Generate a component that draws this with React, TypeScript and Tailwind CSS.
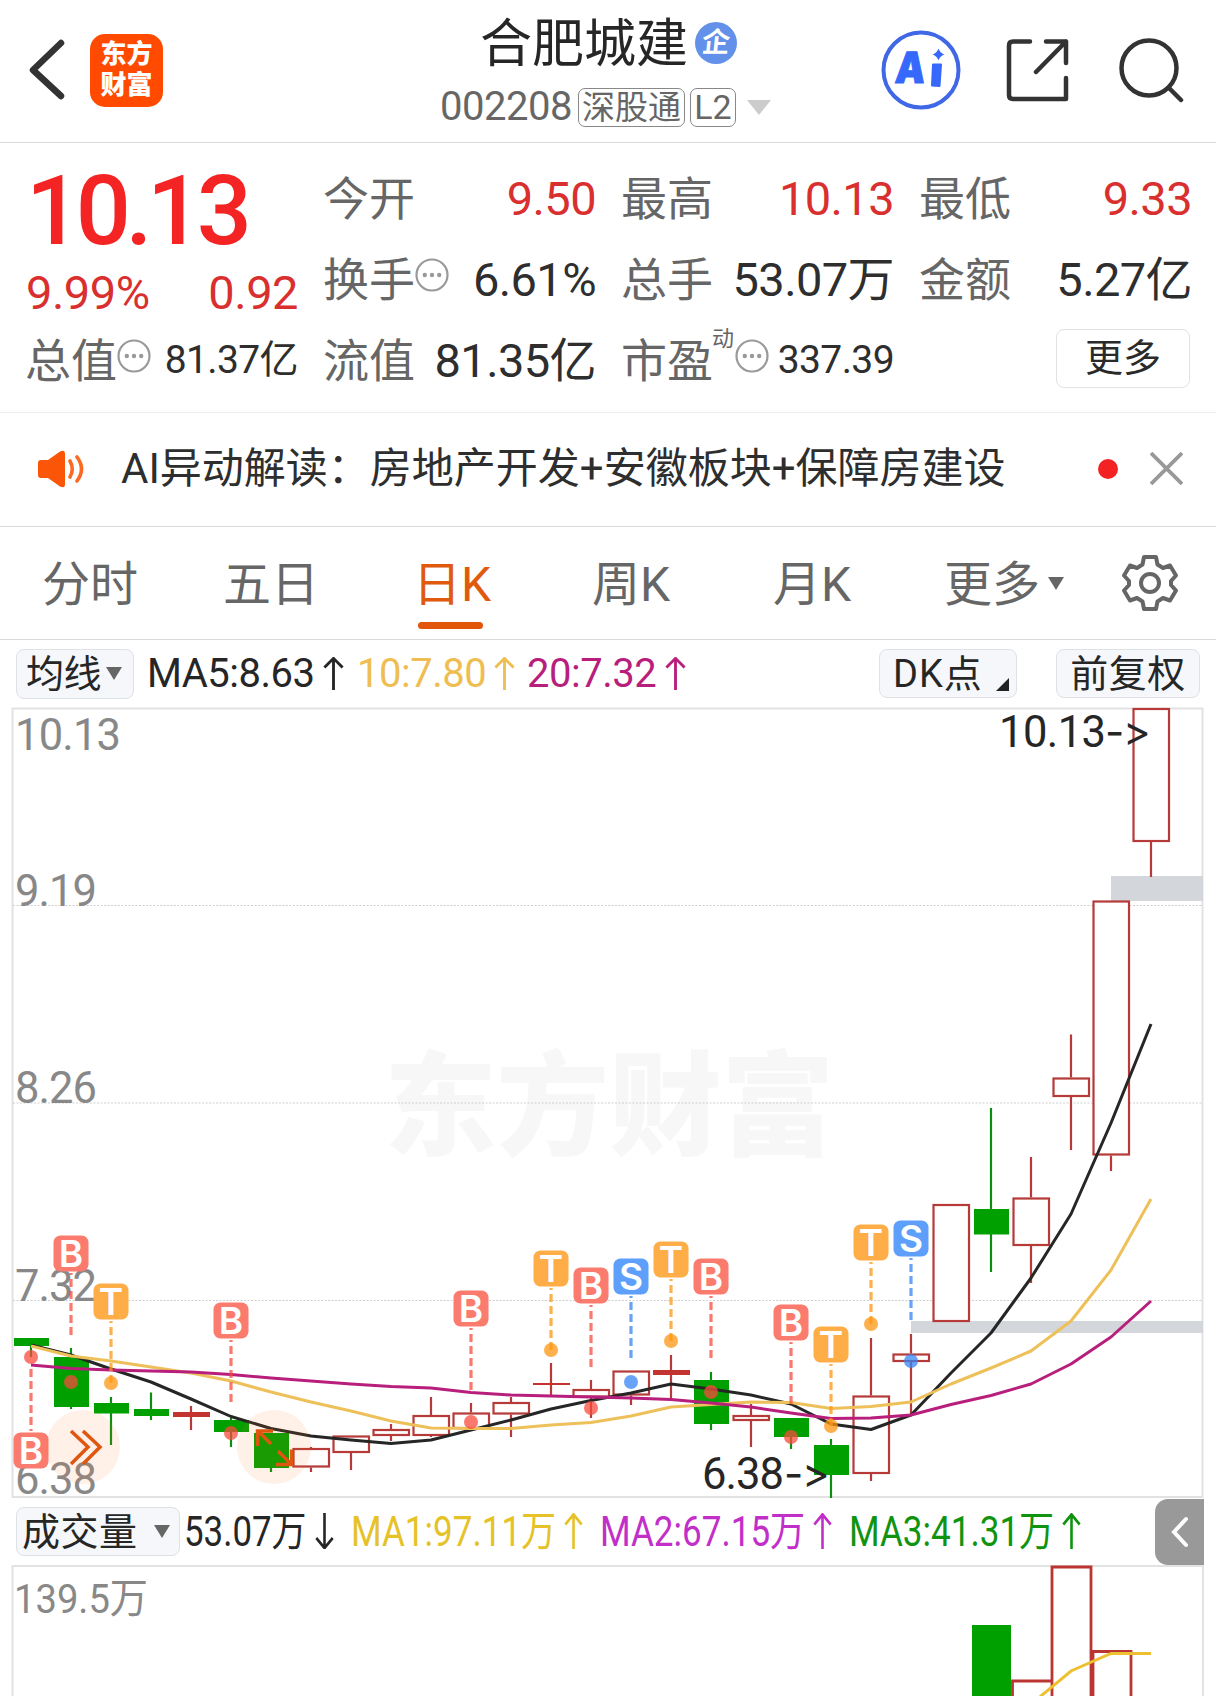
import type { ReactNode } from 'react';

type Candle = {
  open: number;
  close: number;
  high: number;
  low: number;
  up?: boolean;
};

type Marker = {
  index: number;
  type: 'B' | 'S' | 'T';
  y: number;
  dot: number;
};

const MARKER_COLORS = {
  B: '#fb7b6e',
  T: '#ffad47',
  S: '#5e9ffb',
};

const DOT_COLORS = {
  B: '#fa4b3c',
  T: '#fd9512',
  S: '#3584f5',
};

// top / bottom of the body and of the wick, in chart units
const CANDLES: Candle[] = [
  { open: 1338, close: 1346, high: 1338, low: 1357 },
  { open: 1357, close: 1407, high: 1348, low: 1409 },
  { open: 1403, close: 1413.5, high: 1397, low: 1445 },
  { open: 1409, close: 1416, high: 1392.5, low: 1420 },
  { open: 1412, close: 1417, high: 1406, low: 1430, up: true },
  { open: 1420, close: 1432, high: 1418, low: 1447 },
  { open: 1433, close: 1468, high: 1433, low: 1472 },
  { open: 1448, close: 1467.5, high: 1447, low: 1472, up: true },
  { open: 1435.5, close: 1453, high: 1435.5, low: 1470, up: true },
  { open: 1429, close: 1436, high: 1424, low: 1441, up: true },
  { open: 1415, close: 1436, high: 1397, low: 1437, up: true },
  { open: 1412.5, close: 1429, high: 1403, low: 1429, up: true },
  { open: 1402, close: 1414.5, high: 1397, low: 1437, up: true },
  { open: 1383, close: 1385, high: 1363, low: 1395, up: true },
  { open: 1389, close: 1397.5, high: 1380, low: 1418, up: true },
  { open: 1370.5, close: 1395.5, high: 1370.5, low: 1405, up: true },
  { open: 1370, close: 1375, high: 1355, low: 1398, up: true },
  { open: 1380, close: 1424, high: 1372, low: 1430 },
  { open: 1415, close: 1421, high: 1404, low: 1447, up: true },
  { open: 1418, close: 1437, high: 1418, low: 1449 },
  { open: 1445, close: 1475, high: 1439, low: 1498 },
  { open: 1395.5, close: 1474, high: 1338, low: 1481, up: true },
  { open: 1353.5, close: 1362, high: 1334, low: 1415, up: true },
  { open: 1204, close: 1322, high: 1204, low: 1322, up: true },
  { open: 1209, close: 1234.5, high: 1108, low: 1272 },
  { open: 1197.5, close: 1246, high: 1157, low: 1283, up: true },
  { open: 1077.5, close: 1097, high: 1034.5, low: 1150, up: true },
  { open: 900.5, close: 1155.5, high: 900.5, low: 1171, up: true },
  { open: 708, close: 842, high: 708, low: 877, up: true },
];

const MARKERS: Marker[] = [
  { index: 0, type: 'B', y: 1450, dot: 1357 },
  { index: 1, type: 'B', y: 1253, dot: 1382 },
  { index: 2, type: 'T', y: 1301, dot: 1383 },
  { index: 5, type: 'B', y: 1320, dot: 1433 },
  { index: 11, type: 'B', y: 1308, dot: 1422 },
  { index: 13, type: 'T', y: 1268, dot: 1350 },
  { index: 14, type: 'B', y: 1285, dot: 1408 },
  { index: 15, type: 'S', y: 1276, dot: 1382 },
  { index: 16, type: 'T', y: 1259, dot: 1341 },
  { index: 17, type: 'B', y: 1276, dot: 1392 },
  { index: 19, type: 'B', y: 1322, dot: 1437 },
  { index: 20, type: 'T', y: 1344, dot: 1426 },
  { index: 21, type: 'T', y: 1242, dot: 1324 },
  { index: 22, type: 'S', y: 1238, dot: 1361 },
];

const MA5 = [
  1345, 1355, 1369, 1382, 1399, 1416.5, 1428.5, 1436, 1440, 1443.5, 1440, 1430, 1420, 1409, 1400.5,
  1393, 1384, 1389, 1395, 1404, 1424, 1429.5, 1415, 1373, 1333, 1278, 1214, 1123, 1024,
];
const MA10 = [
  1346, 1356, 1361, 1367, 1373, 1381, 1392, 1402, 1411, 1421, 1428, 1428.5, 1428.5, 1425, 1422.5,
  1416, 1407, 1404.5, 1402, 1402.5, 1408.5, 1406.5, 1402, 1384, 1368, 1351, 1321, 1270, 1199,
];
const MA20 = [
  1365, 1368.5, 1370, 1371, 1372, 1374.5, 1378, 1381, 1384, 1386.5, 1388, 1392.5, 1395, 1396, 1397,
  1398, 1399.5, 1403, 1407, 1413, 1418.5, 1418, 1415, 1404.5, 1395.5, 1384, 1364, 1337, 1301,
];

const GRID = [
  { label: '10.13', y: 750, width: 106 },
  { label: '9.19', y: 906, width: 82 },
  { label: '8.26', y: 1103, width: 82 },
  { label: '7.32', y: 1301, width: 82 },
  { label: '6.38', y: 1494, width: 82 },
];

const cx = (i: number) => 31 + i * 40;
const toPoints = (values: number[]) => values.map((y, i) => `${cx(i)},${y}`).join(' ');

const Arrow = ({ down, className }: { down?: boolean; className: string }) => (
  <svg viewBox="0 0 22 36" preserveAspectRatio="none" className={`shrink-0 ${className}`}>
    <path
      d={down ? 'M11 0V35M1.5 25 11 35 20.5 25' : 'M11 36V1.5M1.5 11.5 11 1.5 20.5 11.5'}
      fill="none"
      stroke="currentColor"
      strokeWidth="3"
    />
  </svg>
);

const Triangle = ({ className }: { className: string }) => (
  <svg viewBox="0 0 16 13" preserveAspectRatio="none" className={`shrink-0 ${className}`}>
    <path d="M0 0H16L8 13Z" fill="currentColor" />
  </svg>
);

const InfoDots = () => (
  <svg viewBox="0 0 34 34" className="-mt-[10px] ml-[1px] size-[34px] shrink-0 text-[#999]">
    <circle cx="17" cy="17" r="15.5" fill="none" stroke="currentColor" strokeWidth="2.2" />
    <circle cx="9.8" cy="17" r="2.2" fill="currentColor" />
    <circle cx="17" cy="17" r="2.2" fill="currentColor" />
    <circle cx="24.2" cy="17" r="2.2" fill="currentColor" />
  </svg>
);

const Header = () => (
  <header className="flex h-[143px] border-b border-[#d5dbdb]">
    <div className="flex w-[430px] items-center pl-[28px]">
      <svg viewBox="0 0 38 62" className="-mt-[2px] h-[62px] w-[38px]">
        <path d="M33 4 5 31 33 57" fill="none" stroke="#333" strokeWidth="6.5" strokeLinejoin="round" strokeLinecap="round" />
      </svg>
      <div className="-mt-[2px] ml-[24px] flex size-[73px] flex-col items-center justify-center rounded-[15px] bg-[#ff4a00] text-[26px] leading-[31px] font-black text-white">
        <span>东方</span>
        <span>财富</span>
      </div>
    </div>

    <div className="flex w-[356px] flex-col items-center">
      <div className="flex h-[78px] items-center gap-[7px] pt-2 pl-[1px]">
        <h1 className="mt-[3px] text-[52px] leading-none text-[#262626]">合肥城建</h1>
        <div className="flex size-[42px] items-center justify-center rounded-full bg-[#6390e8] text-[28px] leading-none font-bold text-white">
          <span className="-skew-x-6">企</span>
        </div>
      </div>
      <div className="flex h-[58px] items-center gap-[5px] pr-[5px] text-[#666]">
        <span className="mr-[1px] text-[40px] leading-none tracking-[-0.5px]">002208</span>
        <span className="flex h-[39px] items-center rounded-[7px] border border-[#888] px-[3px] text-[33px] leading-none">深股通</span>
        <span className="flex h-[39px] w-[46px] items-center justify-center rounded-[7px] border border-[#888] text-[34px] leading-none">L2</span>
        <Triangle className="ml-[6px] h-[15px] w-[24px] text-[#ccc]" />
      </div>
    </div>

    <div className="flex w-[430px] items-center pl-[95px]">
      <svg viewBox="0 0 80 80" className="-mt-[2px] size-[80px]">
        <circle cx="40" cy="40" r="37.5" fill="none" stroke="#3f67e6" strokeWidth="4" />
        <text x="18" y="53.5" fontFamily="Inter" fontSize="43" fontWeight="900" fill="#3668fb" stroke="#3668fb" textLength="30" lengthAdjust="spacingAndGlyphs" transform="skewX(-5)">
          A
        </text>
        <path d="M52 34.5 60 34.5 58.5 56 51 55.5Z" fill="#3668fb" stroke="#3668fb" strokeWidth="2" strokeLinejoin="round" />
        <path d="M57.5 18.5C59 22 60 23 63.5 24.5 60 26 59 27 57.5 30.5 56 27 55 26 51.5 24.5 55 23 56 22 57.5 18.5Z" fill="#3668fb" />
      </svg>
      <svg viewBox="0 0 64 64" className="-mt-[2px] ml-[45px] size-[64px]">
        <path d="M24 3.5H7Q3 3.5 3 7.5V57Q3 61 7 61H60V40M40 3.5H60V25M60 3.5 30 34" fill="none" stroke="#333" strokeWidth="4.5" strokeLinecap="round" strokeLinejoin="round" />
      </svg>
      <svg viewBox="0 0 66 66" className="-mt-[2px] ml-[48px] size-[66px]">
        <circle cx="31" cy="31" r="27.5" fill="none" stroke="#333" strokeWidth="4.5" />
        <path d="M51 51 63 63" stroke="#333" strokeWidth="4.5" strokeLinecap="round" />
      </svg>
    </div>
  </header>
);

type StatProps = {
  label: string;
  value: string;
  valueClass?: string;
  extra?: ReactNode;
};

const BASE = 'text-[47px] text-[#2e2e2e]';
const SMALL = 'text-[39px] text-[#2e2e2e]';
const RED = 'text-[47px] text-[#d9302f]';

const Stat = ({ label, value, valueClass = BASE, extra }: StatProps) => (
  <div className="flex h-[81px] items-center whitespace-nowrap">
    <span className="-mr-px -ml-px text-[46px] leading-none text-[#666]">{label}</span>
    {extra}
    <span className={`-mr-[2px] ml-auto leading-none tracking-[-0.6px] ${valueClass}`}>{value}</span>
  </div>
);

const Quote = () => (
  <section className="grid h-[270px] grid-cols-4 gap-x-[28px] border-b border-[#ececec] px-[26px] pt-[15px]">
    <div>
      <div className="flex h-[162px] flex-col">
        <span className="mt-[5px] text-[97px] leading-none font-medium tracking-[-5.4px] text-[#f42424]">10.13</span>
        <div className="-mr-[2px] mt-[9px] flex justify-between text-[47px] leading-none tracking-[-0.5px] text-[#d9302f]">
          <span>9.99%</span>
          <span>0.92</span>
        </div>
      </div>
      <Stat label="总值" value="81.37亿" valueClass={SMALL} extra={<InfoDots />} />
    </div>
    <div>
      <Stat label="今开" value="9.50" valueClass={RED} />
      <Stat label="换手" value="6.61%" extra={<InfoDots />} />
      <Stat label="流值" value="81.35亿" />
    </div>
    <div>
      <Stat label="最高" value="10.13" valueClass={RED} />
      <Stat label="总手" value="53.07万" />
      <Stat
        label="市盈"
        value="337.39"
        valueClass={SMALL}
        extra={
          <>
            <span className="-mt-[43px] text-[22px] leading-none text-[#666]">动</span>
            <InfoDots />
          </>
        }
      />
    </div>
    <div>
      <Stat label="最低" value="9.33" valueClass={RED} />
      <Stat label="金额" value="5.27亿" />
      <div className="flex h-[76px] items-center justify-end">
        <button className="flex h-[59px] w-[134px] items-center justify-center rounded-[8px] border border-[#e0e2e3] text-[38px] leading-none text-[#2a2a2a]">
          更多
        </button>
      </div>
    </div>
  </section>
);

const Notice = () => (
  <section className="flex h-[114px] items-center border-b border-[#d8dada] pb-[2px] pl-[36px] whitespace-nowrap">
    <svg viewBox="0 0 50 40" className="h-[40px] w-[50px] shrink-0">
      <path d="M5 11H12L24 2.5Q29 0 29 5V35Q29 40 24 37.5L12 29H5Q2 29 2 26V14Q2 11 5 11Z" fill="#fb5607" />
      <path d="M34 12Q38.5 20 34 28M41 8Q50 20 41 32" fill="none" stroke="#fb6a25" strokeWidth="3.6" strokeLinecap="round" />
    </svg>
    <p className="ml-[35px] w-[977px] text-[42px] leading-none text-[#2e2e2e]">
      AI异动解读：房地产开发+安徽板块+保障房建设
    </p>
    <span className="size-[20px] shrink-0 rounded-full bg-[#f32323]" />
    <svg viewBox="0 0 32 32" className="ml-[32px] size-[33px] shrink-0">
      <path d="M1 1 31 31M31 1 1 31" stroke="#999" strokeWidth="3.6" />
    </svg>
  </section>
);

const Tabs = () => (
  <nav className="flex h-[113px] items-center border-b border-[#d8dada] pt-[4px] pl-[42px] text-[48px] leading-none whitespace-nowrap text-[#666]">
    <span className="w-[181px]">分时</span>
    <span className="w-[190px]">五日</span>
    <span className="relative w-[179px] text-[#e05a0e]">
      日K
      <i className="absolute -bottom-[20px] left-[5px] h-[7px] w-[65px] rounded-full bg-[#e2560b]" />
    </span>
    <span className="w-[181px]">周K</span>
    <span className="w-[171px]">月K</span>
    <span>更多</span>
    <Triangle className="mt-[-4px] ml-[8px] h-[13px] w-[16px]" />
    <svg viewBox="0 0 58 58" className="mt-[-4px] ml-[57px] size-[58px]">
      <path
        d="M23 3H35L36.5 10.5 42 14 49 11.5 55 21.5 50 27V31L55 36.5 49 46.5 42 44 36.5 47.5 35 55H23L21.5 47.5 16 44 9 46.5 3 36.5 8 31V27L3 21.5 9 11.5 16 14 21.5 10.5Z"
        fill="none"
        stroke="currentColor"
        strokeWidth="4"
        strokeLinejoin="round"
      />
      <circle cx="29" cy="29" r="9" fill="none" stroke="currentColor" strokeWidth="4" />
    </svg>
  </nav>
);

const chip = 'flex shrink-0 items-center rounded-[8px] border border-[#dfe2e5] bg-[#f5f7fa] text-[38px] text-[#262626]';

const MaBar = () => (
  <div className="flex h-[67px] items-center pl-[16px] text-[40px] leading-none tracking-[-0.5px] whitespace-nowrap">
    <div className={`${chip} h-[50px] w-[118px] pl-[9px]`}>
      <span>均线</span>
      <Triangle className="ml-[5px] h-[13px] w-[16px] text-[#666]" />
    </div>
    <div className="ml-[13px] flex w-[210px] items-center text-[#262626]">
      <span className="w-[176px]">MA5:8.63</span>
      <Arrow className="h-[33px] w-[21px]" />
    </div>
    <div className="flex w-[170px] items-center text-[#efbe52]">
      <span className="w-[137px]">10:7.80</span>
      <Arrow className="h-[33px] w-[21px]" />
    </div>
    <div className="flex w-[353px] items-center text-[#b81f7c]">
      <span className="w-[138px]">20:7.32</span>
      <Arrow className="h-[33px] w-[21px]" />
    </div>
    <div className={`${chip} -ml-px h-[49px] w-[138px] justify-between pr-[7px] pl-[13px]`}>
      <span className="tracking-[1px]">DK点</span>
      <svg viewBox="0 0 13 13" className="mt-[22px] size-[13px]">
        <path d="M13 0V13H0Z" fill="#222" />
      </svg>
    </div>
    <div className={`${chip} ml-[39px] h-[49px] w-[144px] justify-center`}>
      <span className="tracking-[0.5px]">前复权</span>
    </div>
  </div>
);

const KLineChart = () => (
  <svg viewBox="0 707 1216 791" className="block h-[791px] w-[1216px]">
    <rect x="12.5" y="708.5" width="1190" height="788.5" fill="none" stroke="#e2e2e2" strokeWidth="2" />
    <text x="384" y="1146" fontSize="113" fontWeight="900" fill="#f7f7f7" textLength="450" lengthAdjust="spacingAndGlyphs">
      东方财富
    </text>
    {[905.5, 1103, 1300.5].map(y => (
      <line key={y} x1="13" x2="1202" y1={y} y2={y} stroke="#cfcfcf" strokeWidth="1.2" strokeDasharray="2 1.5" />
    ))}
    <rect x="1111" y="876" width="92" height="25" fill="#d3d7dc" />
    <rect x="911" y="1321" width="292" height="12" fill="#d3d7dc" />

    {GRID.map(({ label, y, width }) => (
      <text key={label} x="15" y={y} fontSize="43.5" fill="#888" textLength={width}>
        {label}
      </text>
    ))}

    {CANDLES.map(({ open, close, high, low, up }, i) => (
      <g key={i}>
        {up ? (
          <>
            <path d={`M${cx(i)} ${high}V${open}M${cx(i)} ${close}V${low}`} stroke="#b53a38" strokeWidth="2.2" />
            {close - open > 5 ? (
              <rect x={cx(i) - 17.5} y={open + 1} width="35.5" height={close - open - 2} fill="#fff" stroke="#b53a38" strokeWidth="2.2" />
            ) : (
              <rect x={cx(i) - 18} y={open} width="37" height={close - open} fill="#c33431" />
            )}
          </>
        ) : (
          <>
            <line x1={cx(i)} x2={cx(i)} y1={high} y2={low} stroke="#0c8f10" strokeWidth="2.2" />
            <rect x={cx(i) - 17} y={open} width="35" height={close - open} fill="#00a000" />
          </>
        )}
      </g>
    ))}

    <g fill="none" strokeWidth="3" strokeLinejoin="round">
      <polyline points={toPoints(MA5)} stroke="#262626" />
      <polyline points={toPoints(MA10)} stroke="#eec05a" />
      <polyline points={toPoints(MA20)} stroke="#b81f7c" />
    </g>

    {MARKERS.map(({ index, type, y, dot }) => {
      const x = cx(index);
      const below = y > dot;
      return (
        <g key={index}>
          <line
            x1={x}
            x2={x}
            y1={below ? y - 19 : y + 20}
            y2={below ? y - 81 : y + 82}
            stroke={DOT_COLORS[type]}
            strokeOpacity="0.75"
            strokeWidth="3.2"
            strokeDasharray="8 4"
            strokeDashoffset="6"
          />
          <circle cx={x} cy={dot} r="7" fill={DOT_COLORS[type]} fillOpacity="0.75" />
          <rect x={x - 17.5} y={y - 17.5} width="35" height="36" rx="7" fill={MARKER_COLORS[type]} />
          <text x={x} y={y + 14} textAnchor="middle" fontFamily="Inter" fontSize="37" fontWeight="600" fill="#fff">
            {type}
          </text>
        </g>
      );
    })}

    <g fill="none" stroke="#e0560f" strokeWidth="3.5">
      <circle cx="83" cy="1447" r="37" fill="#ff6a20" fillOpacity="0.1" stroke="none" />
      <path d="M71 1431 88 1447 71 1464M83 1431 100 1447 83 1464" />
      <circle cx="274" cy="1447" r="37" fill="#ff6a20" fillOpacity="0.1" stroke="none" />
      <path d="M271 1444 258 1431M257.5 1446V1431H273M278 1451 291 1464M276 1464.5H291.5V1449.5" />
    </g>

    <g fontSize="43.5" fill="#262626">
      <text x="999" y="747" textLength="107">10.13</text>
      <text x="1105" y="747" fontFamily="Inter" fontSize="42">-</text>
      <text x="1123" y="746" fontFamily="Inter" fontSize="42">&gt;</text>
      <text x="702" y="1489" textLength="82">6.38</text>
      <text x="784" y="1489" fontFamily="Inter" fontSize="42">-</text>
      <text x="802" y="1488" fontFamily="Inter" fontSize="42">&gt;</text>
    </g>
  </svg>
);

const VOLUME_ITEMS = [
  { label: 'MA1:97.11万', color: 'text-[#e6c229]' },
  { label: 'MA2:67.15万', color: 'text-[#c22fc8]' },
  { label: 'MA3:41.31万', color: 'text-[#109410]' },
];

const VolumeBar = () => (
  <div className="flex h-[67px] items-center pl-[16px] text-[42px] leading-none whitespace-nowrap">
    <div className={`${chip} h-[49px] w-[164px] pl-[5px]`}>
      <span className="tracking-[0.5px]">成交量</span>
      <Triangle className="ml-[16px] h-[13px] w-[16px] text-[#666]" />
    </div>
    <div className="ml-[4px] flex w-[167px] items-center text-[#262626]">
      <span className="w-[131px] origin-left scale-x-[0.83]">53.07万</span>
      <Arrow down className="-mt-[2px] h-[36px] w-[19px]" />
    </div>
    {VOLUME_ITEMS.map(({ label, color }) => (
      <div key={label} className={`flex w-[249px] items-center ${color}`}>
        <span className="w-[213px] origin-left scale-x-[0.835]">{label}</span>
        <Arrow className="-mt-[2px] h-[36px] w-[19px]" />
      </div>
    ))}
    <button className="mr-[12px] ml-auto flex h-[66px] w-[49px] shrink-0 items-center justify-center rounded-l-[13px] bg-[#999]">
      <svg viewBox="0 0 20 32" className="h-[32px] w-[20px]">
        <path d="M16 3 4 16 16 29" fill="none" stroke="#fff" strokeWidth="4" strokeLinecap="round" />
      </svg>
    </button>
  </div>
);

const VolumeChart = () => (
  <svg viewBox="0 1565 1216 131" className="block h-[131px] w-[1216px]">
    <path d="M12.5 1696V1566H1203V1696" fill="none" stroke="#e2e2e2" strokeWidth="2" />
    <text x="14" y="1613" fontSize="41" fill="#888" textLength="134" lengthAdjust="spacingAndGlyphs">
      139.5万
    </text>
    <rect x="972" y="1625" width="39" height="80" fill="#00a000" />
    <g fill="none" stroke="#bb3533" strokeWidth="2.8">
      <path d="M1012.5 1700V1681H1051" />
      <path d="M1052 1700V1567H1091V1700" />
      <path d="M1093 1700V1651.5H1131V1700" />
    </g>
    <polyline points="1035,1701 1071,1671 1111,1653.5 1151,1653.5" fill="none" stroke="#edc02f" strokeWidth="3" />
  </svg>
);

const App = () => (
  <main className="h-[1696px] w-[1216px] overflow-hidden bg-white font-['Roboto','Noto_Sans_CJK_SC',sans-serif]">
    <Header />
    <Quote />
    <Notice />
    <Tabs />
    <MaBar />
    <KLineChart />
    <VolumeBar />
    <VolumeChart />
  </main>
);

export default App;
